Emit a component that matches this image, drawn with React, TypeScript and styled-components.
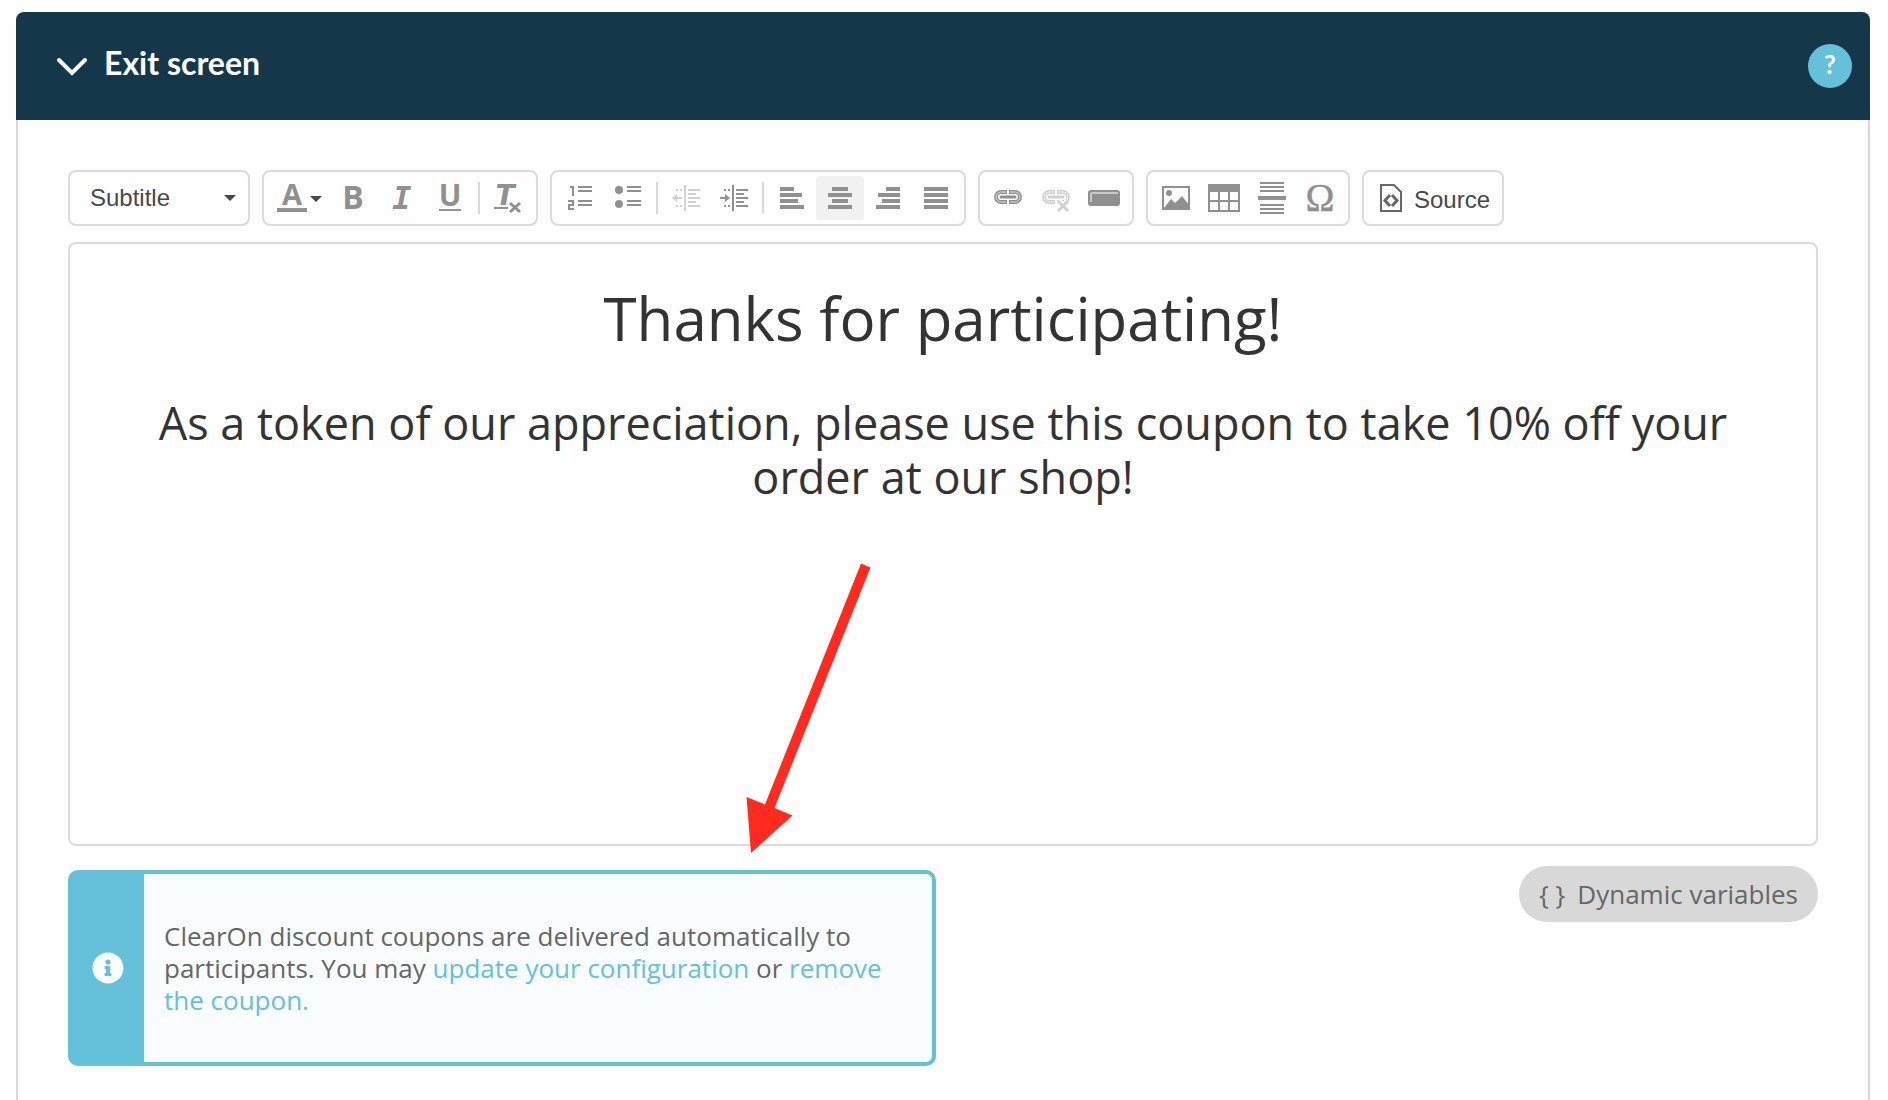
import React from "react";
import styled, { createGlobalStyle } from "styled-components";
import { FaInfoCircle } from "react-icons/fa";

const GlobalStyle = createGlobalStyle`
  *, *::before, *::after { box-sizing: border-box; }
  body { margin: 0; background: #fefefe; font-family: "Open Sans", "Noto Sans", sans-serif; }
  button, select { font: inherit; color: inherit; background: none; border: 0; margin: 0; padding: 0; cursor: pointer; }
  h1, h2, p { margin: 0; font-weight: 400; }
  svg { display: block; flex: none; overflow: visible; }
`;

const accent = "#65c0da";
const line = "#d8d8d8";
const glyph = "#909090";

const Page = styled.main`
  min-height: 100vh;
  display: flex;
  padding: 12px 18px 0 16px;
`;

const Card = styled.section`
  flex: 1;
  min-width: 0;
  display: flex;
  flex-direction: column;
`;

const Header = styled.header`
  display: flex;
  align-items: center;
  justify-content: space-between;
  height: 108px;
  padding: 0 18px 0 40px;
  border-radius: 8px 8px 0 0;
  background: #15374a;
  color: #fff;
`;

const Toggle = styled.button`
  display: flex;
  align-items: center;
  gap: 16px;
  font-family: Lato, "Open Sans", sans-serif;
  font-size: 32px;
  line-height: 36px;
  font-weight: 700;
  > span { padding-bottom: 6px; }
`;

const Help = styled.button`
  width: 44px;
  height: 44px;
  border-radius: 50%;
  background: ${accent};
  color: #fff;
  font-family: Lato, "Open Sans", sans-serif;
  font-size: 26px;
  line-height: 40px;
  font-weight: 700;
  padding-bottom: 4px;
`;

const Body = styled.div`
  flex: 1;
  padding: 50px 50px 34px;
  border: 2px solid ${line};
  border-width: 0 2px;
`;

const Toolbar = styled.div`
  display: flex;
  flex-wrap: wrap;
  gap: 12px;
  font-family: "Liberation Sans", Arial, sans-serif;
  font-size: 24px;
  color: #484848;
`;

const Group = styled.div`
  display: flex;
  align-items: center;
  height: 56px;
  padding: 0 4px;
  border: 2px solid #dcdcdc;
  border-radius: 8px;
`;

const FormatBox = styled.label`
  display: grid;
  align-items: center;
  width: 182px;
  height: 56px;
  border: 2px solid #dcdcdc;
  border-radius: 8px;
  > * { grid-area: 1 / 1; }
  > svg { justify-self: end; margin-right: 12px; pointer-events: none; }
`;

const FormatSelect = styled.select`
  appearance: none;
  width: 100%;
  height: 52px;
  padding: 0 32px 2px 20px;
`;

const Tool = styled.button<{ $on?: boolean; $wide?: boolean }>`
  width: ${(p) => (p.$wide ? "62px" : "48px")};
  height: 44px;
  border-radius: 4px;
  background: ${(p) => (p.$on ? "#f1f1f1" : "transparent")};
  color: ${glyph};
  &:disabled { opacity: 0.4; cursor: default; }
`;

const Separator = styled.span`
  width: 2px;
  height: 32px;
  margin: 0 4px;
  background: ${line};
`;

const SourceTool = styled.button`
  display: flex;
  align-items: center;
  gap: 12px;
  height: 44px;
  padding: 0 8px 0 12px;
  > span { padding-top: 4px; }
`;

const EditorStage = styled.div`
  position: relative;
  margin-top: 16px;
`;

const Editor = styled.div`
  min-height: 604px;
  padding: 38px 40px;
  border: 2px solid #dcdcdc;
  border-radius: 8px;
  color: #333;
  text-align: center;
  outline: none;
`;

const EditorTitle = styled.h1`
  font-size: 60px;
  line-height: 72px;
`;

const EditorSubtitle = styled.h2`
  margin-top: 42px;
  font-size: 45px;
  line-height: 54px;
`;

const Pointer = styled.svg`
  position: absolute;
  left: 676px;
  top: 320px;
  pointer-events: none;
`;

const Footer = styled.div`
  display: flex;
  align-items: flex-start;
  justify-content: space-between;
  gap: 24px;
  margin-top: 20px;
`;

const Notice = styled.aside`
  flex: 0 1 868px;
  display: flex;
  min-height: 196px;
  margin-top: 4px;
  border: 4px solid ${accent};
  border-radius: 10px;
  background: #f9fdff;
`;

const NoticeMark = styled.div`
  flex: none;
  display: flex;
  align-items: center;
  justify-content: center;
  width: 72px;
  background: ${accent};
  color: #f9fdff;
`;

const NoticeText = styled.p`
  align-self: center;
  padding: 0 40px 0 20px;
  font-size: 26px;
  line-height: 32px;
  color: #666;
`;

const NoticeLink = styled.a`
  color: ${accent};
  text-decoration: none;
`;

const Variables = styled.button`
  flex: none;
  display: flex;
  align-items: center;
  gap: 12px;
  height: 56px;
  padding: 0 20px;
  border-radius: 28px;
  background: ${line};
  color: #666;
  font-size: 26px;
  line-height: 36px;
`;

function Icon({ children, width = 48 }: { children: React.ReactNode; width?: number }) {
  return (
    <svg width={width} height="44" viewBox={`0 0 ${width} 44`} fill="currentColor" aria-hidden="true">
      {children}
    </svg>
  );
}

interface LetterProps {
  x: number;
  y: number;
  size: number;
  italic?: boolean;
  family?: string;
  children: string;
}

function Letter({ x, y, size, italic, family = "Open Sans", children }: LetterProps) {
  return (
    <text x={x} y={y} fontSize={size} fontWeight="700" fontStyle={italic ? "italic" : "normal"} fontFamily={`"${family}", sans-serif`} textAnchor="middle">
      {children}
    </text>
  );
}

type Bar = [x: number, y: number, width: number, height: number];

function Bars({ bars }: { bars: Bar[] }) {
  return (
    <Icon>
      {bars.map(([x, y, w, h]) => (
        <rect key={`${x}-${y}`} x={x} y={y} width={w} height={h} />
      ))}
    </Icon>
  );
}

const alignRows = [14, 22, 18, 24];
const alignLeft = alignRows.map((w, i): Bar => [12, 11 + i * 6, w, 4]);
const alignRight = alignRows.map((w, i): Bar => [36 - w, 11 + i * 6, w, 4]);
const alignCenter = [16, 24, 16, 24].map((w, i): Bar => [24 - w / 2, 11 + i * 6, w, 4]);
const alignFull = alignRows.map((_, i): Bar => [12, 11 + i * 6, 24, 4]);
const ruleBars: Bar[] = [
  [12, 6, 24, 2], [12, 10, 24, 2], [12, 14, 24, 2],
  [10, 20, 28, 4],
  [12, 28, 24, 2], [12, 32, 24, 2], [12, 36, 24, 2],
];

const Caret = () => (
  <svg width="12" height="6" viewBox="0 0 12 6" fill="#484848" aria-hidden="true">
    <path d="M0 0h12L6 6z" />
  </svg>
);

const IndentLines = () => (
  <>
    <path d="M22 9h2v26h-2zM26 13h12v2H26zM26 17h8v2h-8zM26 21h12v2H26zM26 25h8v2h-8zM26 29h12v2H26z" />
    <path d="M14 13h2v2h-2zM18 13h2v2h-2zM14 29h2v2h-2zM18 29h2v2h-2z" />
  </>
);

const Chain = () => (
  <g fill="none" stroke="currentColor">
    <path strokeWidth="4" d="M23 16h-6a5 5 0 0 0 0 10h6M25 16h6a5 5 0 0 1 0 10h-6" />
    <path strokeWidth="1" stroke="#fff" opacity=".7" d="M22 16h-5a5 5 0 0 0 0 10h5M26 16h5a5 5 0 0 1 0 10h-5" />
    <path strokeWidth="3" strokeLinecap="round" d="M17 21h14" />
  </g>
);

export default function App() {
  return (
    <Page>
      <GlobalStyle />
      <Card>
        <Header>
          <h2>
            <Toggle type="button" aria-expanded="true">
              <svg width="32" height="20" viewBox="0 0 32 20" fill="none" stroke="#fff" strokeWidth="4" strokeLinecap="round" aria-hidden="true">
                <path d="M3 4l13 13L29 4" />
              </svg>
              <span>Exit screen</span>
            </Toggle>
          </h2>
          <Help type="button" aria-label="Help">?</Help>
        </Header>

        <Body>
          <Toolbar role="toolbar" aria-label="Editor toolbar">
            <FormatBox>
              <FormatSelect aria-label="Paragraph format" defaultValue="Subtitle">
                <option>Subtitle</option>
              </FormatSelect>
              <Caret />
            </FormatBox>

            <Group>
              <Tool type="button" $wide aria-label="Text color">
                <Icon width={62}>
                  <Letter x={24} y={29} size={29}>A</Letter>
                  <path d="M9 32h30v4H9z" />
                  <path fill="#484848" d="M42 20h12l-6 6z" />
                </Icon>
              </Tool>
              <Tool type="button" aria-label="Bold"><Icon><Letter x={23} y={33} size={32}>B</Letter></Icon></Tool>
              <Tool type="button" aria-label="Italic">
                <Icon><Letter x={24} y={33} size={32} italic family="DejaVu Sans Mono">I</Letter></Icon>
              </Tool>
              <Tool type="button" aria-label="Underline">
                <Icon><Letter x={24} y={30} size={30}>U</Letter><path d="M13 33h22v2H13z" /></Icon>
              </Tool>
              <Separator />
              <Tool type="button" aria-label="Remove format">
                <Icon>
                  <Letter x={21} y={29} size={28} italic family="DejaVu Sans">T</Letter>
                  <path d="M10 31h14v2H10z" />
                  <path d="M26 27l10 9M36 27l-10 9" stroke="currentColor" strokeWidth="3" />
                </Icon>
              </Tool>
            </Group>

            <Group>
              <Tool type="button" aria-label="Numbered list">
                <Icon>
                  <path d="M22 10h14v2H22zM22 14h14v2H22zM22 24h14v2H22zM22 28h14v2H22z" />
                  <path d="M14 11h3v9M12 25h5v4h-4v4h5" fill="none" stroke="currentColor" strokeWidth="2" />
                </Icon>
              </Tool>
              <Tool type="button" aria-label="Bulleted list">
                <Icon>
                  <circle cx="15" cy="14" r="4" /><circle cx="15" cy="28" r="4" />
                  <path d="M23 10h14v2H23zM23 14h14v2H23zM23 24h14v2H23zM23 28h14v2H23z" />
                </Icon>
              </Tool>
              <Separator />
              <Tool type="button" disabled aria-label="Decrease indent">
                <Icon><IndentLines /><path d="M10 22l5-4v3h5v2h-5v3z" /></Icon>
              </Tool>
              <Tool type="button" aria-label="Increase indent">
                <Icon><IndentLines /><path d="M20 22l-5-4v3h-5v2h5v3z" /></Icon>
              </Tool>
              <Separator />
              <Tool type="button" aria-label="Align left"><Bars bars={alignLeft} /></Tool>
              <Tool type="button" $on aria-pressed="true" aria-label="Center"><Bars bars={alignCenter} /></Tool>
              <Tool type="button" aria-label="Align right"><Bars bars={alignRight} /></Tool>
              <Tool type="button" aria-label="Justify"><Bars bars={alignFull} /></Tool>
            </Group>

            <Group>
              <Tool type="button" aria-label="Link"><Icon><Chain /></Icon></Tool>
              <Tool type="button" disabled aria-label="Unlink">
                <Icon>
                  <Chain />
                  <path d="M26 25l10 10M36 25L26 35" stroke="#fff" strokeWidth="6" />
                  <path d="M26 25l10 10M36 25L26 35" stroke="currentColor" strokeWidth="3" />
                </Icon>
              </Tool>
              <Tool type="button" aria-label="Insert button">
                <Icon>
                  <rect x="8" y="14" width="32" height="16" rx="3" />
                  <path d="M10 26v-8q0-2 2-2h26v2H13q-1 0-1 1v7z" fill="#c8c8c8" />
                </Icon>
              </Tool>
            </Group>

            <Group>
              <Tool type="button" aria-label="Image">
                <Icon>
                  <rect x="11" y="11" width="26" height="22" fill="none" stroke="currentColor" strokeWidth="2" />
                  <circle cx="17" cy="17" r="3" />
                  <path d="M12 32l7-9 4 4 7-7 7 9v4H12z" />
                </Icon>
              </Tool>
              <Tool type="button" aria-label="Table">
                <Icon>
                  <path fillRule="evenodd" d="M8 8h32v28H8zM10 16v8h8v-8zM20 16v8h8v-8zM30 16v8h8v-8zM10 26v8h8v-8zM20 26v8h8v-8zM30 26v8h8v-8z" />
                </Icon>
              </Tool>
              <Tool type="button" aria-label="Horizontal line"><Bars bars={ruleBars} /></Tool>
              <Tool type="button" aria-label="Special character">
                <Icon>
                  <text x="24" y="35" fontSize="39" fontFamily='"Liberation Serif", serif' textAnchor="middle" stroke="currentColor" strokeWidth=".4">Ω</text>
                </Icon>
              </Tool>
            </Group>

            <Group>
              <SourceTool type="button">
                <svg width="22" height="28" viewBox="0 0 22 28" fill="none" stroke="#666" strokeWidth="2" aria-hidden="true">
                  <path d="M1 1h13l7 7v19H1z" />
                  <path strokeWidth="3" d="M10 11l-5 5.500 5 5.500M12 11l5 5.500-5 5.500" />
                </svg>
                <span>Source</span>
              </SourceTool>
            </Group>
          </Toolbar>

          <EditorStage>
            <Editor role="textbox" aria-multiline="true" aria-label="Exit screen message" contentEditable suppressContentEditableWarning spellCheck={false}>
              <EditorTitle>Thanks for participating!</EditorTitle>
              <EditorSubtitle>
                As a token of our appreciation, please use this coupon to take 10% off your order at our shop!
              </EditorSubtitle>
            </Editor>
            <Pointer width="126" height="294" viewBox="0 0 126 294" fill="#fe2b1e" aria-hidden="true">
              <path d="M117 1.500l9.500 4L30.500 246l18 7.500L7 291 2.500 235l18.500 7.500z" />
            </Pointer>
          </EditorStage>

          <Footer>
            <Notice>
              <NoticeMark><FaInfoCircle size={32} aria-hidden="true" /></NoticeMark>
              <NoticeText>
                ClearOn discount coupons are delivered automatically to participants. You may{" "}
                <NoticeLink href="#configuration">update your configuration</NoticeLink> or{" "}
                <NoticeLink href="#remove">remove the coupon.</NoticeLink>
              </NoticeText>
            </Notice>
            <Variables type="button">
              <span>{"{ }"}</span>
              Dynamic variables
            </Variables>
          </Footer>
        </Body>
      </Card>
    </Page>
  );
}
